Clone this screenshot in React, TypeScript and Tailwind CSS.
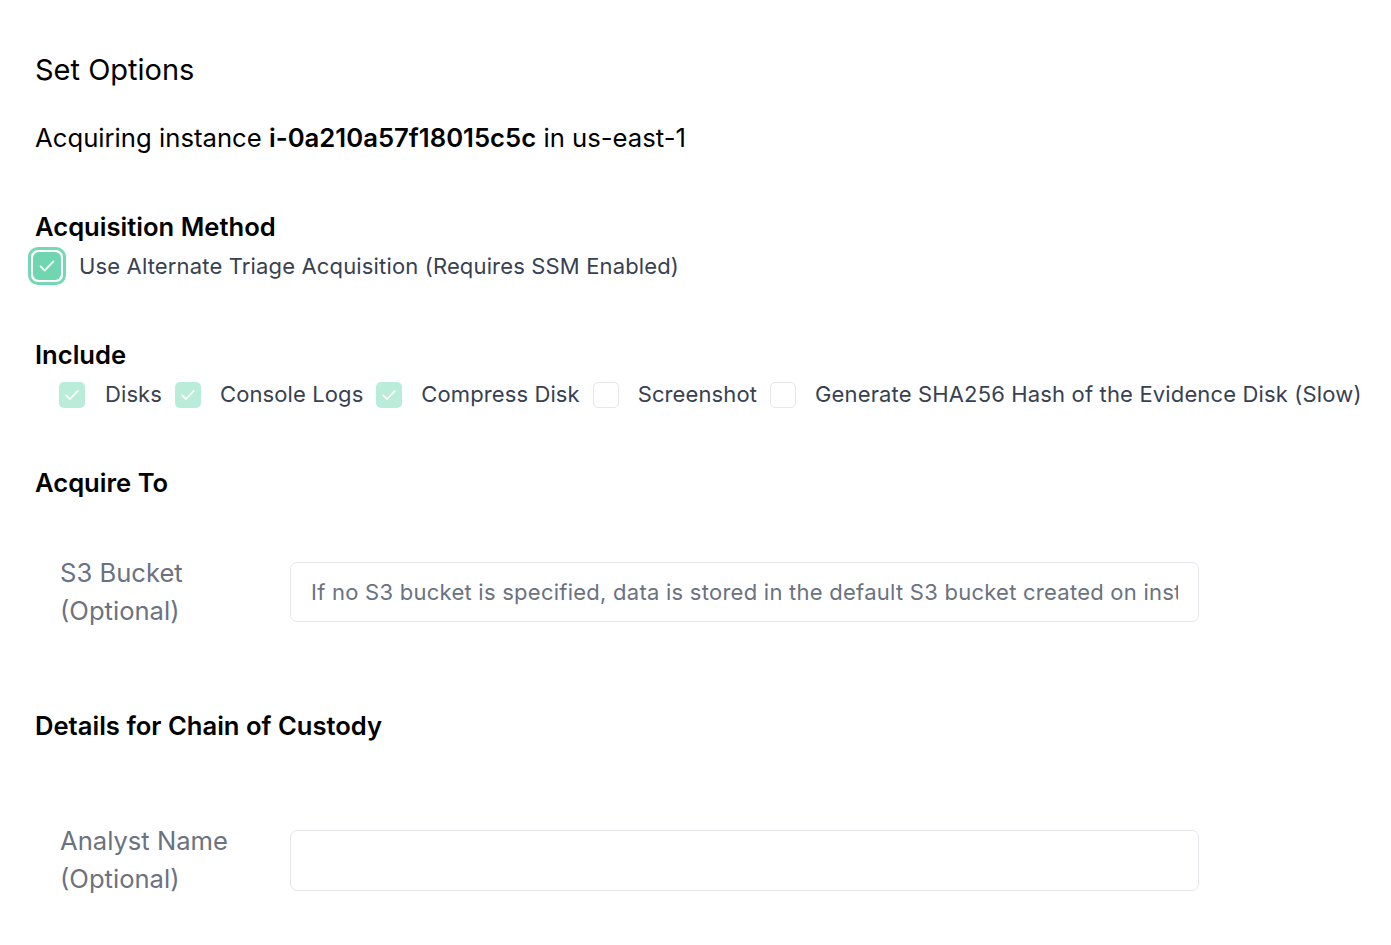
import React from "react";

const Check = ({ className = "" }: { className?: string }) => (
  <svg viewBox="0 0 24 24" className={className} fill="none" stroke="white" strokeWidth="2" strokeLinecap="round" strokeLinejoin="round">
    <path d="M5 12.5l4.5 4.5L19 7" />
  </svg>
);

const SmallBox = ({ checked }: { checked: boolean }) =>
  checked ? (
    <span className="flex h-[26px] w-[26px] shrink-0 items-center justify-center rounded-[5px] bg-[#b9ecd9]">
      <Check className="h-[20px] w-[20px]" />
    </span>
  ) : (
    <span className="h-[26px] w-[26px] shrink-0 rounded-[5px] border border-[#e5e7eb] bg-white" />
  );

export default function App() {
  return (
    <div className="min-h-[945px] bg-white pl-[35px] pt-[50px] text-black" style={{ fontFamily: "Inter, 'Noto Sans', sans-serif" }}>
      <h1 className="text-[29px] leading-[40px]">Set Options</h1>
      <p className="mt-[30px] text-[25.7px] leading-[36px]">
        Acquiring instance <span className="font-semibold">i-0a210a57f18015c5c</span> in us-east-1
      </p>

      <h2 className="mt-[54px] text-[25.6px] font-semibold leading-[34px]">Acquisition Method</h2>
      <label className="ml-[-7px] mt-[3px] flex items-center gap-[13px]">
        <span className="flex h-[38px] w-[38px] items-center justify-center rounded-[10px] border-[3px] border-[#74d8b5]">
          <span className="flex h-[28px] w-[28px] items-center justify-center rounded-[6px] bg-[#6fd6b1]">
            <Check className="h-[22px] w-[22px]" />
          </span>
        </span>
        <span className="text-[22px] tracking-[0.15px] text-[#374151]">Use Alternate Triage Acquisition (Requires SSM Enabled)</span>
      </label>

      <h2 className="mt-[53px] text-[25.6px] font-semibold leading-[34px]">Include</h2>
      <div className="ml-[24px] mt-[6px] flex items-center text-[22px] tracking-[0.1px] text-[#374151]">
        <SmallBox checked />
        <span className="ml-[20px] mr-[13px]">Disks</span>
        <SmallBox checked />
        <span className="ml-[19px] mr-[13px]">Console Logs</span>
        <SmallBox checked />
        <span className="ml-[19px] mr-[13px]">Compress Disk</span>
        <SmallBox checked={false} />
        <span className="ml-[19px] mr-[13px]">Screenshot</span>
        <SmallBox checked={false} />
        <span className="ml-[19px] whitespace-nowrap tracking-[0.15px]">Generate SHA256 Hash of the Evidence Disk (Slow)</span>
      </div>

      <h2 className="mt-[55px] text-[25.6px] font-semibold leading-[34px]">Acquire To</h2>
      <div className="mt-[54px] flex items-center">
        <div className="w-[255px] pl-[25px] text-[25.6px] leading-[38px] text-[#6b7280]">
          S3 Bucket
          <br />
          (Optional)
        </div>
        <input
          className="h-[60px] w-[909px] rounded-[7px] border border-[#e5e7eb] px-[20px] text-[22px] tracking-[0.25px] text-[#374151] placeholder:text-[#6b7280] outline-none"
          placeholder="If no S3 bucket is specified, data is stored in the default S3 bucket created on instance startup"
        />
      </div>

      <h2 className="mt-[79px] text-[25.6px] font-semibold leading-[34px]">Details for Chain of Custody</h2>
      <div className="mt-[79px] flex items-center">
        <div className="w-[255px] pl-[25px] text-[25.6px] leading-[38px] text-[#6b7280]">
          Analyst Name
          <br />
          (Optional)
        </div>
        <input className="h-[61px] w-[909px] rounded-[7px] border border-[#e5e7eb] px-[20px] text-[22px] outline-none" />
      </div>
    </div>
  );
}
